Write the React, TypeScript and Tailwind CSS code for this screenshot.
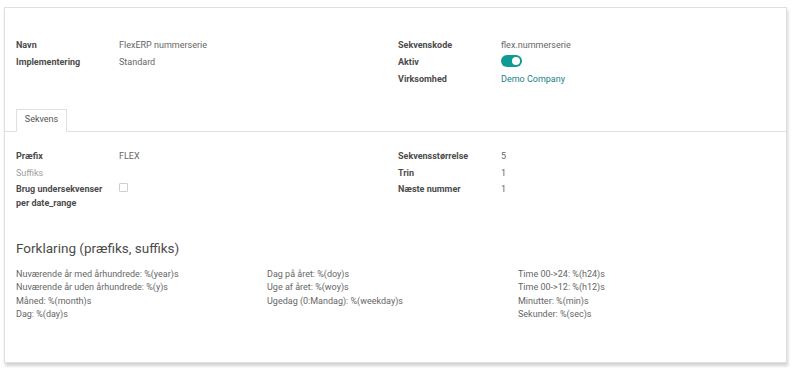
const label = "w-[103px] shrink-0 pr-2 font-bold text-[#4c4c4c]";
const value = "text-[#666]";

function Row({ name, children, muted }: { name: string; children?: React.ReactNode; muted?: boolean }) {
  return (
    <div className="flex py-[1.25px] leading-[14px]">
      <div className={muted ? "w-[103px] shrink-0 pr-2 text-[#a0a0a0]" : label}>{name}</div>
      <div className={value}>{children}</div>
    </div>
  );
}

function Toggle() {
  return (
    <span className="mt-[0.5px] inline-flex h-[12px] w-[21px] items-center justify-end rounded-full bg-[#0f9a94] px-[2px]">
      <span className="h-[8px] w-[8px] rounded-full bg-white" />
    </span>
  );
}

const legend = [
  ["Nuværende år med århundrede: %(year)s", "Nuværende år uden århundrede: %(y)s", "Måned: %(month)s", "Dag: %(day)s"],
  ["Dag på året: %(doy)s", "Uge af året: %(woy)s", "Ugedag (0:Mandag): %(weekday)s"],
  ["Time 00->24: %(h24)s", "Time 00->12: %(h12)s", "Minutter: %(min)s", "Sekunder: %(sec)s"],
];

export default function App() {
  return (
    <main
      className="h-[368px] w-[795px] overflow-hidden bg-white pt-[7px] pl-[4px] pr-[8px] text-[9px]"
      style={{ fontFamily: "Roboto, 'Liberation Sans', sans-serif" }}
    >
      <div className="h-[356px] border border-[#dcdfe4] bg-white shadow-[1px_3px_3px_rgba(0,0,0,0.18)]">
        <section className="grid grid-cols-[382px_1fr] px-[11px] pt-[29px]">
          <div>
            <Row name="Navn">FlexERP nummerserie</Row>
            <Row name="Implementering">Standard</Row>
          </div>
          <div>
            <Row name="Sekvenskode">flex.nummerserie</Row>
            <Row name="Aktiv">
              <Toggle />
            </Row>
            <Row name="Virksomhed">
              <span className="text-[#1a7f86]">Demo Company</span>
            </Row>
          </div>
        </section>

        <div className="mt-[22px] flex border-b border-[#dcdfe4] pl-[11px]">
          <div className="-mb-px flex h-[23px] w-[51px] items-center justify-center border border-b-white border-[#dcdfe4] bg-white pb-px text-[#555]">
            Sekvens
          </div>
        </div>

        <section className="grid grid-cols-[382px_1fr] px-[11px] pt-[16px]">
          <div>
            <Row name="Præfix">FLEX</Row>
            <Row name="Suffiks" muted />
            <Row name="Brug undersekvenser per date_range">
              <span className="mt-[1px] block h-[9px] w-[9px] rounded-[1px] border border-[#cfcfcf] bg-white" />
            </Row>
          </div>
          <div>
            <Row name="Sekvensstørrelse">5</Row>
            <Row name="Trin">1</Row>
            <Row name="Næste nummer">1</Row>
          </div>
        </section>

        <h2 className="mt-[28px] px-[11px] text-[13.5px] leading-[17px] text-[#4c4c4c]">Forklaring (præfiks, suffiks)</h2>

        <section className="mt-[11px] grid grid-cols-[251px_251px_1fr] px-[11px] leading-[13.6px] text-[#666]">
          {legend.map((col, i) => (
            <div key={i}>
              {col.map((t) => (
                <div key={t}>{t}</div>
              ))}
            </div>
          ))}
        </section>
      </div>
    </main>
  );
}
